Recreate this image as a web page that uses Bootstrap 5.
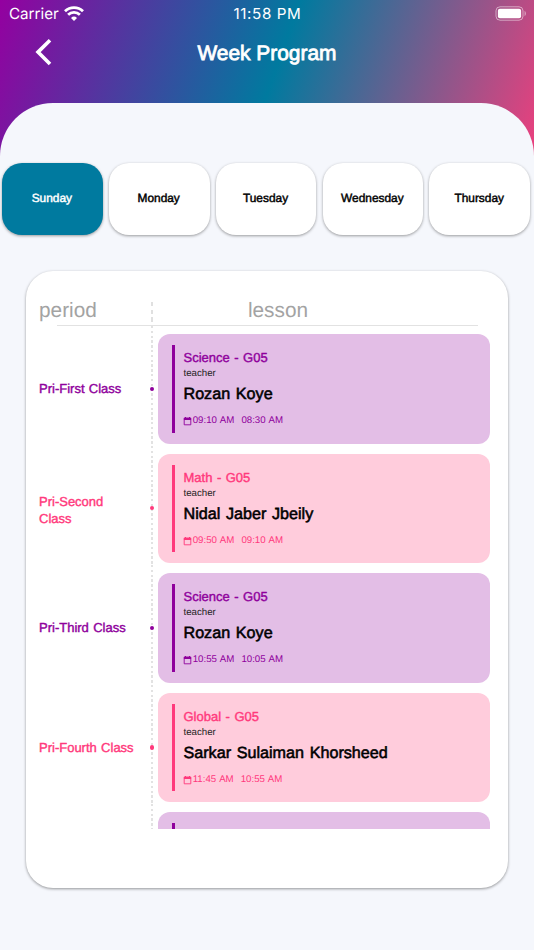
<!DOCTYPE html>
<html lang="en">
<head>
<meta charset="utf-8">
<meta name="viewport" content="width=device-width, initial-scale=1">
<title>Week Program</title>
<link href="https://cdn.jsdelivr.net/npm/bootstrap@5.3.0/dist/css/bootstrap.min.css" rel="stylesheet">
<style>
:root{--violet:#8f009c;--rose:#ff397c;--teal:#007a9f}
body{width:534px;height:950px;overflow:hidden;background:#f5f7fc;font-family:"Liberation Sans",Arial,sans-serif;color:#000;text-rendering:geometricPrecision}
.hero{height:190px;background:linear-gradient(109.6deg,#9400a0 0%,var(--teal) 50%,#f53d7c 100%)}
.status{height:27px;font:15.2px/27px Inter,sans-serif;padding:0 7px 0 9px;color:#fff}
.status > *{flex:1 1 0}
.clock{letter-spacing:.6px;padding-right:1px}
.title-row{height:75.5px;padding-left:35px}
.title-row h1{font-size:20.9px;line-height:24px;padding:2.5px 35px 0 0;-webkit-text-stroke:.8px #fff}
.back{width:18px;height:28px;margin-right:-18px}
.sheet{height:847.5px;margin-top:-87.5px;border-radius:53px 53px 0 0;background:#f5f7fc;padding-top:60.5px}
.days{padding:0 4px 0 2px;gap:6.2px}
.day{flex:1 1 0;height:72px;border-radius:20px;background:#fff;box-shadow:0 1px 3px rgba(0,0,0,.38);font-size:11.9px;padding-right:1px;-webkit-text-stroke:.45px currentColor}
.day.on{background:var(--teal);color:#fff}
.board{margin:36px 26px 0;height:617px;border-radius:27px;background:#fff;box-shadow:0 1px 3px rgba(0,0,0,.4);padding-top:26px}
.heads{height:28px;font-size:20.8px;line-height:28px;color:#a3a3a3}
.heads .c1{width:125px;padding-left:13px}
.heads .c2{width:250px}
.tick{width:2px;height:20px;margin-top:5px;background:repeating-linear-gradient(#e0e0e0 0 4.5px,transparent 4.5px 7.6px)}
.rule{height:1px;margin:0 30px 0 31px;background:#e2e2e2}
.list-clip{height:503px;overflow:hidden}
.slot{height:119.55px}
.slot .period{width:125px;padding:7px 12px 0 13px;font-size:13px;line-height:16.6px;word-spacing:.7px;-webkit-text-stroke:.4px currentColor}
.slot .period.two{padding-right:30px;padding-top:11px}
.rail{width:1.6px;padding-top:6px;background:repeating-linear-gradient(#e2e2e2 0 2.4px,transparent 2.4px 4.8px)}
.rail i{display:block;width:4.2px;height:4.2px;border-radius:50%;background:currentColor;margin-left:-1.3px;flex:none}
.lesson{width:332px;height:109.6px;margin:8px 0 0 5.9px;border-radius:12px;padding:11px 0 11px 13.5px}
.bar{width:3px;height:87.5px;background:currentColor}
.violet{color:var(--violet)}.violet .lesson{background:#e3bee6}
.rose{color:var(--rose)}.rose .lesson{background:#ffccdc}
.info{padding:5px 0 0 8.5px}
.subj{font-size:13px;line-height:16px;word-spacing:.9px;-webkit-text-stroke:.4px currentColor}
.role{font-size:9.7px;line-height:13px;color:#222;margin-top:1px}
.who{font-size:16.15px;line-height:20px;color:#000;word-spacing:1.2px;-webkit-text-stroke:.55px #000;margin-top:4.3px}
.time{font-size:9.7px;line-height:12px;margin-top:11px;white-space:pre;word-spacing:.8px}
.time svg{width:9px;height:10px;margin-right:.2px}
</style>
</head>
<body>
<svg class="d-none"><symbol id="cal" viewBox="0 0 9 10"><path d="M1.2 2.2h6.6v6.6H1.2z" fill="none" stroke="currentColor" stroke-width=".9"/><path d="M.9 1.8h7.2v2.1H.9zM2 .9h1v1.5H2zM6 .9h1v1.5H6z" fill="currentColor"/></symbol></svg>
<header class="hero">
  <div class="status d-flex align-items-center">
    <div class="d-flex align-items-center"><span>Carrier</span>
      <svg class="ms-1" width="22" height="16" viewBox="0 0 22 16" fill="none" stroke="#fff" stroke-width="2.8"><path d="M2 5.2a13 13 0 0 1 18 0M5.1 8.8a8.4 8.4 0 0 1 11.8 0"/><path d="M11 15 8 11.9a4.3 4.3 0 0 1 6 0z" fill="#fff" stroke="none"/></svg></div>
    <div class="clock text-center">11:58 PM</div>
    <div class="text-end d-flex justify-content-end"><svg width="32" height="15" viewBox="0 0 32 15"><rect x="1" y=".8" width="27" height="13.4" rx="4" fill="none" stroke="#fff" stroke-opacity=".5"/><rect x="2.9" y="2.7" width="23.2" height="9.6" rx="2" fill="#fff"/><path d="M29.6 5v5c1.6-.6 1.6-4.4 0-5z" fill="#fff" fill-opacity=".55"/></svg></div>
  </div>
  <div class="title-row d-flex pt-2 mt-1 text-white">
    <svg class="back flex-shrink-0" viewBox="0 0 18 28" fill="none" stroke="#fff" stroke-width="3.6"><path d="M15 1.3 3 13.1 15 25"/></svg>
    <h1 class="flex-fill text-center fw-normal mb-0">Week Program</h1>
  </div>
</header>
<main class="sheet position-relative">
  <nav class="days d-flex">
    <div class="day on d-flex align-items-center justify-content-center">Sunday</div>
    <div class="day d-flex align-items-center justify-content-center">Monday</div>
    <div class="day d-flex align-items-center justify-content-center">Tuesday</div>
    <div class="day d-flex align-items-center justify-content-center">Wednesday</div>
    <div class="day d-flex align-items-center justify-content-center">Thursday</div>
  </nav>
  <section class="board">
    <div class="heads d-flex"><div class="c1">period</div><div class="tick"></div><div class="c2 text-center">lesson</div></div>
    <div class="rule"></div>
    <div class="list-clip">
      <div class="slot violet d-flex"><div class="period d-flex align-items-center">Pri-First Class</div><div class="rail d-flex align-items-center"><i></i></div>
        <article class="lesson d-flex"><div class="bar"></div><div class="info"><div class="subj">Science - G05</div><div class="role">teacher</div><div class="who">Rozan Koye</div><div class="time d-flex align-items-center"><svg><use href="#cal"/></svg><span>09:10 AM  08:30 AM</span></div></div></article></div>
      <div class="slot rose d-flex"><div class="period two d-flex align-items-center">Pri-Second Class</div><div class="rail d-flex align-items-center"><i></i></div>
        <article class="lesson d-flex"><div class="bar"></div><div class="info"><div class="subj">Math - G05</div><div class="role">teacher</div><div class="who">Nidal Jaber Jbeily</div><div class="time d-flex align-items-center"><svg><use href="#cal"/></svg><span>09:50 AM  09:10 AM</span></div></div></article></div>
      <div class="slot violet d-flex"><div class="period d-flex align-items-center">Pri-Third Class</div><div class="rail d-flex align-items-center"><i></i></div>
        <article class="lesson d-flex"><div class="bar"></div><div class="info"><div class="subj">Science - G05</div><div class="role">teacher</div><div class="who">Rozan Koye</div><div class="time d-flex align-items-center"><svg><use href="#cal"/></svg><span>10:55 AM  10:05 AM</span></div></div></article></div>
      <div class="slot rose d-flex"><div class="period d-flex align-items-center">Pri-Fourth Class</div><div class="rail d-flex align-items-center"><i></i></div>
        <article class="lesson d-flex"><div class="bar"></div><div class="info"><div class="subj">Global - G05</div><div class="role">teacher</div><div class="who">Sarkar Sulaiman Khorsheed</div><div class="time d-flex align-items-center"><svg><use href="#cal"/></svg><span>11:45 AM  10:55 AM</span></div></div></article></div>
      <div class="slot violet d-flex"><div class="period"></div><div class="rail"></div><article class="lesson d-flex"><div class="bar"></div></article></div>
    </div>
  </section>
</main>
<script src="https://cdn.jsdelivr.net/npm/bootstrap@5.3.0/dist/js/bootstrap.bundle.min.js"></script>
</body>
</html>
